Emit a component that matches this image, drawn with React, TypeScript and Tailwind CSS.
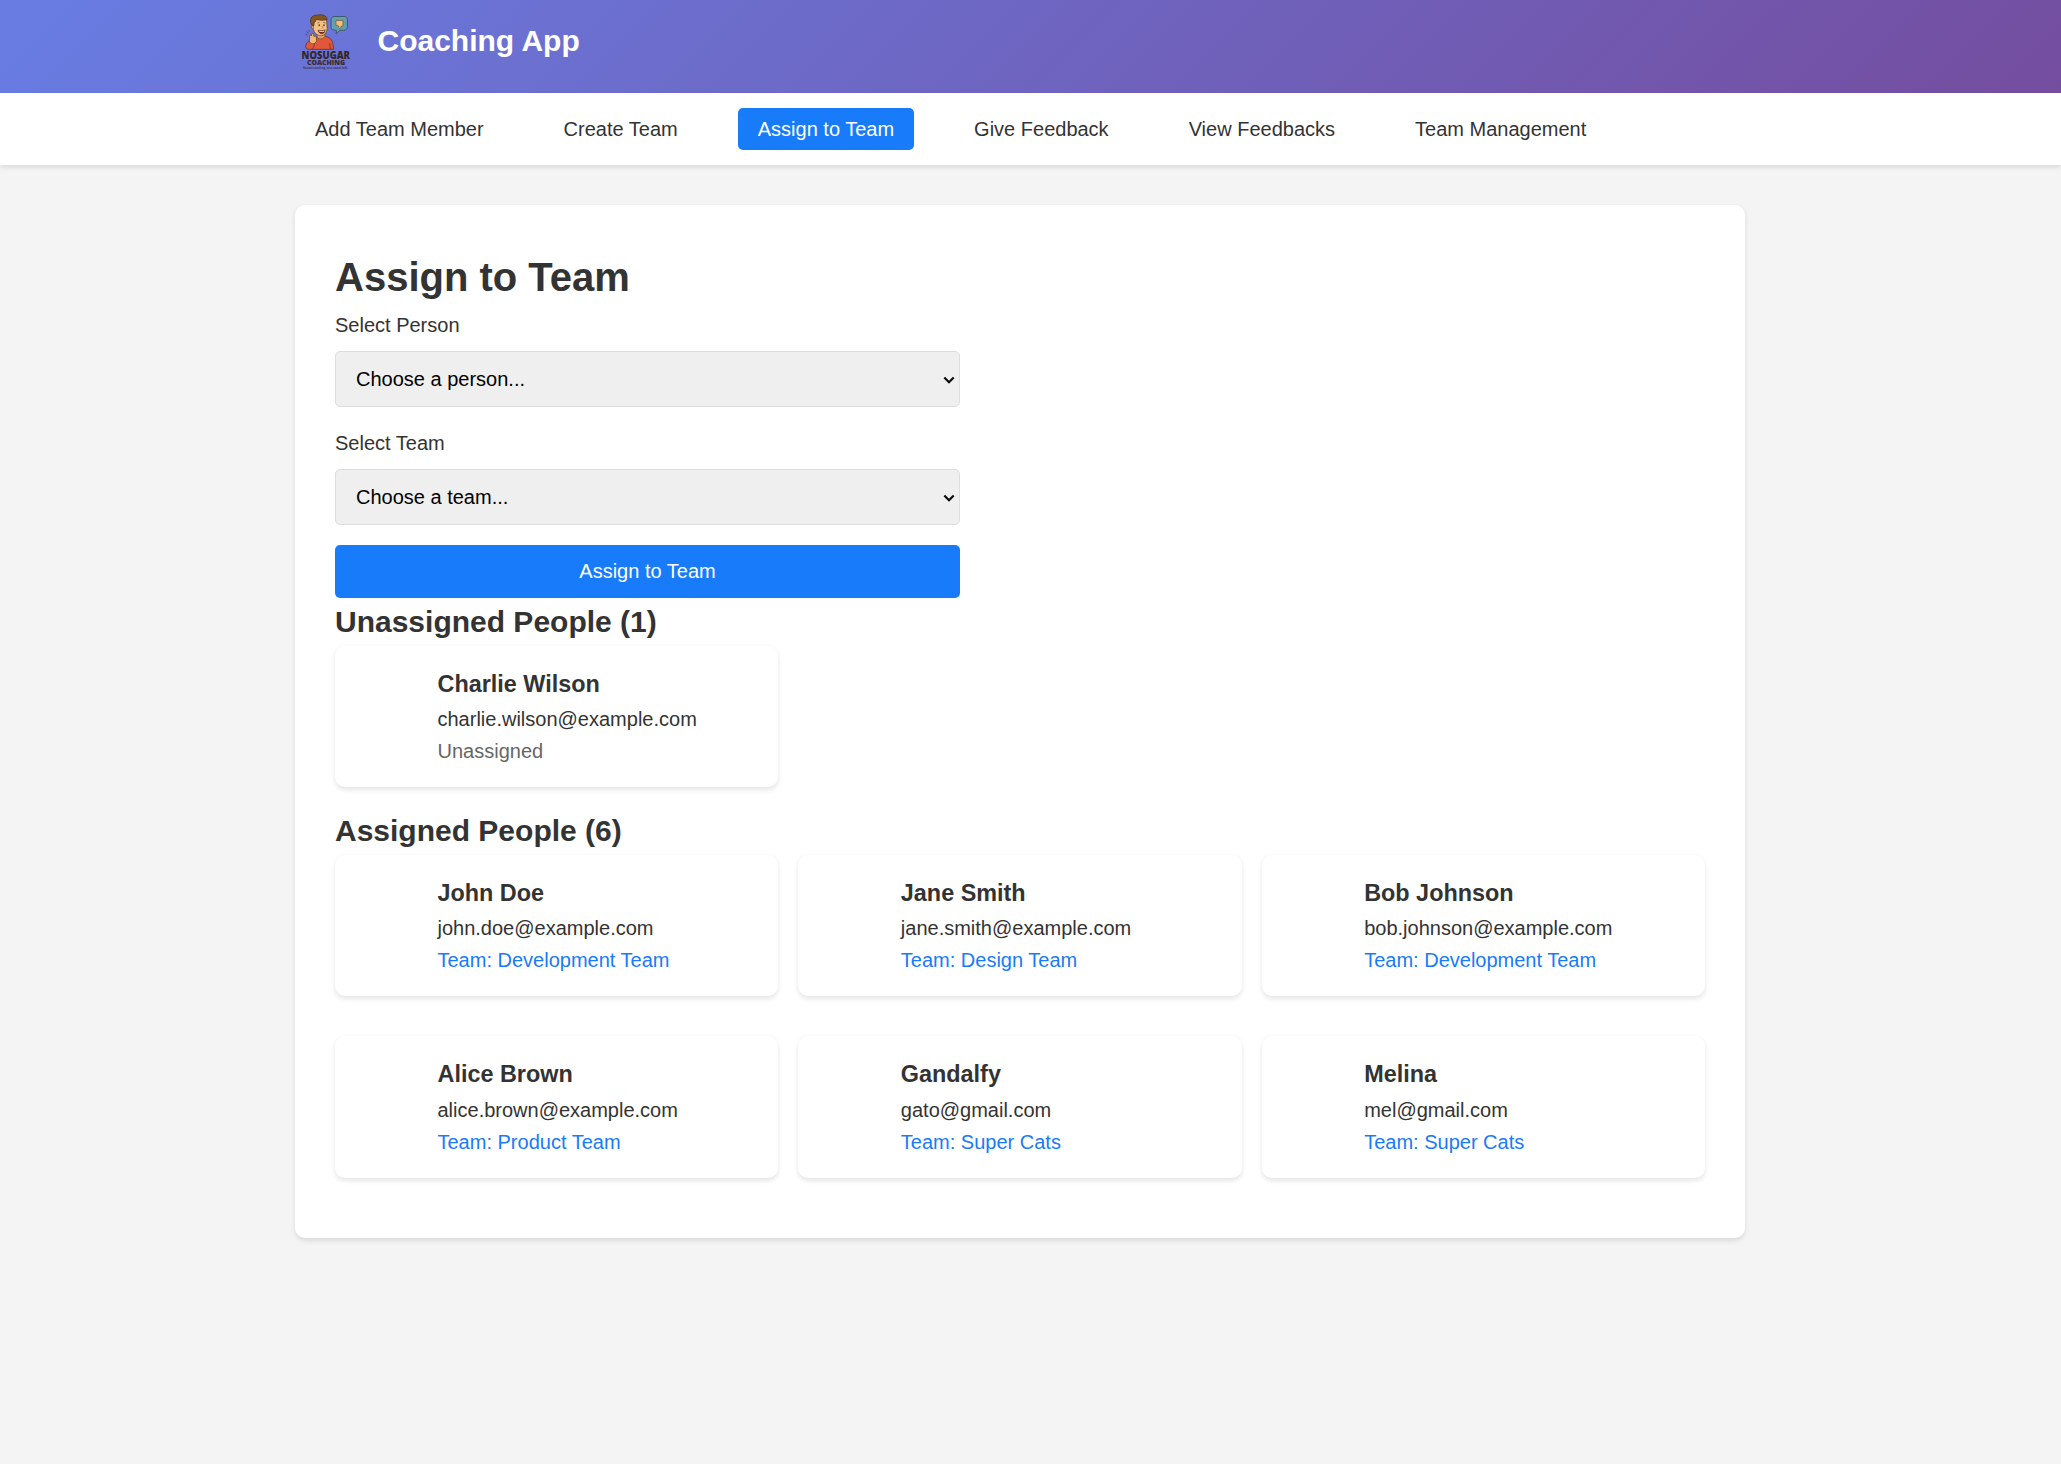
import React from "react";

const navItems = [
  "Add Team Member",
  "Create Team",
  "Assign to Team",
  "Give Feedback",
  "View Feedbacks",
  "Team Management",
];

type Person = { name: string; email: string; team?: string };

const unassigned: Person[] = [
  { name: "Charlie Wilson", email: "charlie.wilson@example.com" },
];

const assigned: Person[] = [
  { name: "John Doe", email: "john.doe@example.com", team: "Development Team" },
  { name: "Jane Smith", email: "jane.smith@example.com", team: "Design Team" },
  { name: "Bob Johnson", email: "bob.johnson@example.com", team: "Development Team" },
  { name: "Alice Brown", email: "alice.brown@example.com", team: "Product Team" },
  { name: "Gandalfy", email: "gato@gmail.com", team: "Super Cats" },
  { name: "Melina", email: "mel@gmail.com", team: "Super Cats" },
];

function Logo() {
  return (
    <svg className="h-20 w-[62.5px] shrink-0" viewBox="5 0 62.5 80" fill="none">
      {/* torso */}
      <path
        d="M15.8 46C16 43 18 41 21 40L27.5 37.5L35 36.3C39 37 41.5 39 42.5 42L43.7 49.3H19C16.5 49.3 15.6 48 15.8 46Z"
        fill="#e2573a"
        stroke="#55302a"
        strokeWidth="0.7"
      />
      <path d="M24.5 43.5C24.5 45.5 23.5 47.5 22 49M39.6 43L40.4 49" stroke="#7a3022" strokeWidth="0.8" />
      <path d="M26.8 33L27.3 37.6C29.5 39.5 33 39 34.8 36.5V33Z" fill="#e3a868" stroke="#55391f" strokeWidth="0.5" />
      {/* head */}
      <path
        d="M23 20.5C24 17 34 16 36.6 20L37.2 28.5C36.9 32.5 34 35.8 31 35.8C27 35.8 24 32.5 23.2 29Z"
        fill="#f3c086"
        stroke="#55391f"
        strokeWidth="0.7"
      />
      <path d="M22.7 24.5C20.8 23.8 20.8 28.8 23 28.8" fill="#eeb679" stroke="#55391f" strokeWidth="0.7" />
      <path
        d="M22.5 26L20.9 23C19.3 17.5 23 14.9 28 15C33 14.2 37.5 16 37 19.8C33.5 20.6 29 20.2 26 19.4C26 21.4 25.2 22 24.3 22.4L23.7 26Z"
        fill="#845722"
        stroke="#4a3118"
        strokeWidth="0.7"
      />
      <path d="M27.3 23L29.5 22.4M33.2 22.4L35.4 22.9" stroke="#55391f" strokeWidth="0.6" />
      <ellipse cx="29.2" cy="25.3" rx="0.7" ry="1" fill="#3a2415" />
      <ellipse cx="34" cy="25.3" rx="0.7" ry="1" fill="#3a2415" />
      <path d="M32 25.5L32.8 28.1L31.6 28.4" stroke="#a7682e" strokeWidth="0.5" />
      <path d="M28 30.2C30.5 31 33 30.8 35.2 29.8C34.8 32.8 33.3 34 31.6 33.8C29.8 33.7 28.5 32.3 28 30.2Z" fill="#7c2a20" stroke="#3a2415" strokeWidth="0.5" />
      <path d="M28.9 30.7C30.8 31.3 32.7 31.2 34.4 30.5L34 31.8H29.5Z" fill="#fff3df" />
      {/* hand */}
      <path
        d="M20.7 43.2C19 41.8 19.2 39.5 19.7 37.5C19 34.5 20.9 34 21.4 36L21.9 34C22.5 32.2 24 32.9 23.7 35L23.9 36.5C25.6 35.2 27.1 36.4 26.4 38L26.6 40.8C25.6 43.5 22.8 44.6 20.7 43.2Z"
        fill="#f0b87a"
        stroke="#55391f"
        strokeWidth="0.7"
      />
      <path d="M15.4 34L17.3 35.4M17 31.6L18.5 33.3M18.7 30.3L19.4 31.6" stroke="#3f3558" strokeWidth="0.8" />
      {/* speech bubble with thumbs down */}
      <path
        d="M44.3 16.5H54C56.4 16.5 57.4 17.8 57.4 20V26.5C57.4 29 56 30.3 53.3 30.3H50.2L46 33.8L46.5 30.3C42.5 30.3 41 29 41 26.5V20C41 18 42 16.5 44.3 16.5Z"
        fill="#649fb0"
        stroke="#3a5560"
        strokeWidth="0.9"
      />
      <path
        d="M46 20.4H53V25.8L51.4 26.2L50.2 28.6C48.8 28.6 48.6 27.5 48.7 25.9L46 25.4Z"
        fill="#f0bd7c"
        stroke="#6d5535"
        strokeWidth="0.7"
      />
      {/* wordmark */}
      <text x="11.6" y="58.7" textLength="48.4" lengthAdjust="spacingAndGlyphs" className="fill-[#33262b] font-['Open_Sans'] text-[10.8px] font-extrabold">
        NOSUGAR
      </text>
      <text x="17" y="64.8" textLength="38" lengthAdjust="spacingAndGlyphs" className="fill-[#392b32] font-['Open_Sans'] text-[7px] font-extrabold">
        COACHING
      </text>
      <text x="13" y="68.6" textLength="45" lengthAdjust="spacingAndGlyphs" className="fill-[#443857] font-['Open_Sans'] text-[3px] font-bold">
        Honest coaching, zero sweet talk.
      </text>
    </svg>
  );
}

function SelectField({ label, placeholder }: { label: string; placeholder: string }) {
  return (
    <div className="mb-5">
      <label className="mb-2.5 block">{label}</label>
      <div className="relative">
        <select className="block h-14 w-full appearance-none rounded-[5px] border border-[#ddd] bg-[#efefef] px-5 pt-0.5 text-[20px] leading-[23px] text-black">
          <option>{placeholder}</option>
        </select>
        <svg className="pointer-events-none absolute top-6 right-[5px] h-3 w-3" viewBox="0 0 12 12" fill="none">
          <path d="M1.3 2.5L6 7.2L10.7 2.5" stroke="#0a0a0a" strokeWidth="2.2" />
        </svg>
      </div>
    </div>
  );
}

function PersonCard({ person }: { person: Person }) {
  return (
    <div className="mb-5 flex items-center gap-5 rounded-[10px] bg-white p-5 shadow-[0_2.5px_5px_rgba(0,0,0,0.1)]">
      <div className="size-[62.5px] shrink-0 rounded-full" />
      <div>
        <h3 className="text-[23.4px] leading-[37.44px] font-bold">{person.name}</h3>
        <p>{person.email}</p>
        {person.team ? (
          <p className="text-[#177bfa]">Team: {person.team}</p>
        ) : (
          <p className="text-[#666]">Unassigned</p>
        )}
      </div>
    </div>
  );
}

function PeopleSection({ title, people }: { title: string; people: Person[] }) {
  return (
    <section>
      <h2 className="text-[30px] leading-[48px] font-bold">{title}</h2>
      <div className="grid grid-cols-3 gap-5">
        {people.map((p) => (
          <PersonCard key={p.email} person={p} />
        ))}
      </div>
    </section>
  );
}

export default function App() {
  return (
    <div className="min-h-screen bg-[#f4f4f4] font-['Liberation_Sans',Arial,sans-serif] text-[20px] leading-[32px] text-[#333]">
      <header className="h-[92.5px] bg-[linear-gradient(135deg,#687de3_0%,#744d9f_100%)] pr-[21px]">
        <div className="mx-auto flex w-[1450px] items-start gap-5">
          <Logo />
          <h1 className="pt-[16.5px] text-[30px] leading-[48px] font-bold text-white">Coaching App</h1>
        </div>
      </header>
      <nav className="bg-white py-5 pr-[21px] shadow-[0_2.5px_5px_rgba(0,0,0,0.1)]">
        <ul className="mx-auto flex w-[1450px] gap-10">
          {navItems.map((item) => (
            <li key={item}>
              <a
                className={
                  item === "Assign to Team"
                    ? "rounded-[5px] bg-[#177bfa] px-5 py-2.5 text-white"
                    : "rounded-[5px] px-5 py-2.5"
                }
              >
                {item}
              </a>
            </li>
          ))}
        </ul>
      </nav>
      <div className="pt-10 pr-[21px]">
        <main className="mx-auto w-[1450px] rounded-[10px] bg-white p-10 shadow-[0_2.5px_5px_rgba(0,0,0,0.1)]">
          <h1 className="text-[40px] leading-[64px] font-bold">Assign to Team</h1>
          <form className="w-[625px]">
            <SelectField label="Select Person" placeholder="Choose a person..." />
            <SelectField label="Select Team" placeholder="Choose a team..." />
            <button type="button" className="block h-[53px] w-full rounded-[5px] bg-[#177bfa] leading-[23px] text-white">
              Assign to Team
            </button>
          </form>
          <PeopleSection title="Unassigned People (1)" people={unassigned} />
          <PeopleSection title="Assigned People (6)" people={assigned} />
        </main>
      </div>
    </div>
  );
}
